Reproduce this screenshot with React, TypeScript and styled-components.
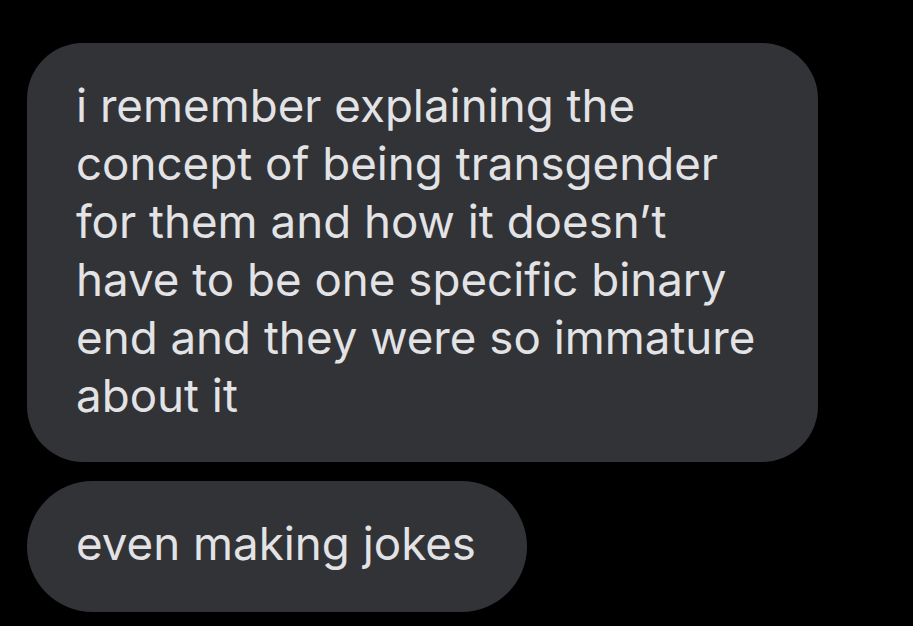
import styled, { createGlobalStyle } from 'styled-components';

const GlobalStyle = createGlobalStyle`
  html, body {
    margin: 0;
    padding: 0;
    background: #000;
  }
`;

const Thread = styled.div`
  display: flex;
  flex-direction: column;
  align-items: flex-start;
  gap: 19px;
  padding: 43px 0 0 27px;
  min-height: 626px;
  box-sizing: border-box;
  background: #000;
  font-family: Inter, "Noto Sans", sans-serif;
`;

const Bubble = styled.div<{ $pill?: boolean }>`
  box-sizing: border-box;
  background: #313337;
  color: #e3e3e6;
  font-size: 45.7px;
  line-height: 58px;
  border-radius: ${(p) => (p.$pill ? '66px' : '56px')};
  padding: ${(p) => (p.$pill ? '34px 51px 39px 49px' : '34px 49px 37px')};
`;

const Line = styled.div`
  white-space: nowrap;
`;

const lines = [
  'i remember explaining the',
  'concept of being transgender',
  'for them and how it doesn’t',
  'have to be one specific binary',
  'end and they were so immature',
  'about it',
];

function App() {
  return (
    <>
      <GlobalStyle />
      <Thread>
        <Bubble style={{ width: 791 }}>
          {lines.map((l) => (
            <Line key={l}>{l}</Line>
          ))}
        </Bubble>
        <Bubble $pill>even making jokes</Bubble>
      </Thread>
    </>
  );
}

export default App;
